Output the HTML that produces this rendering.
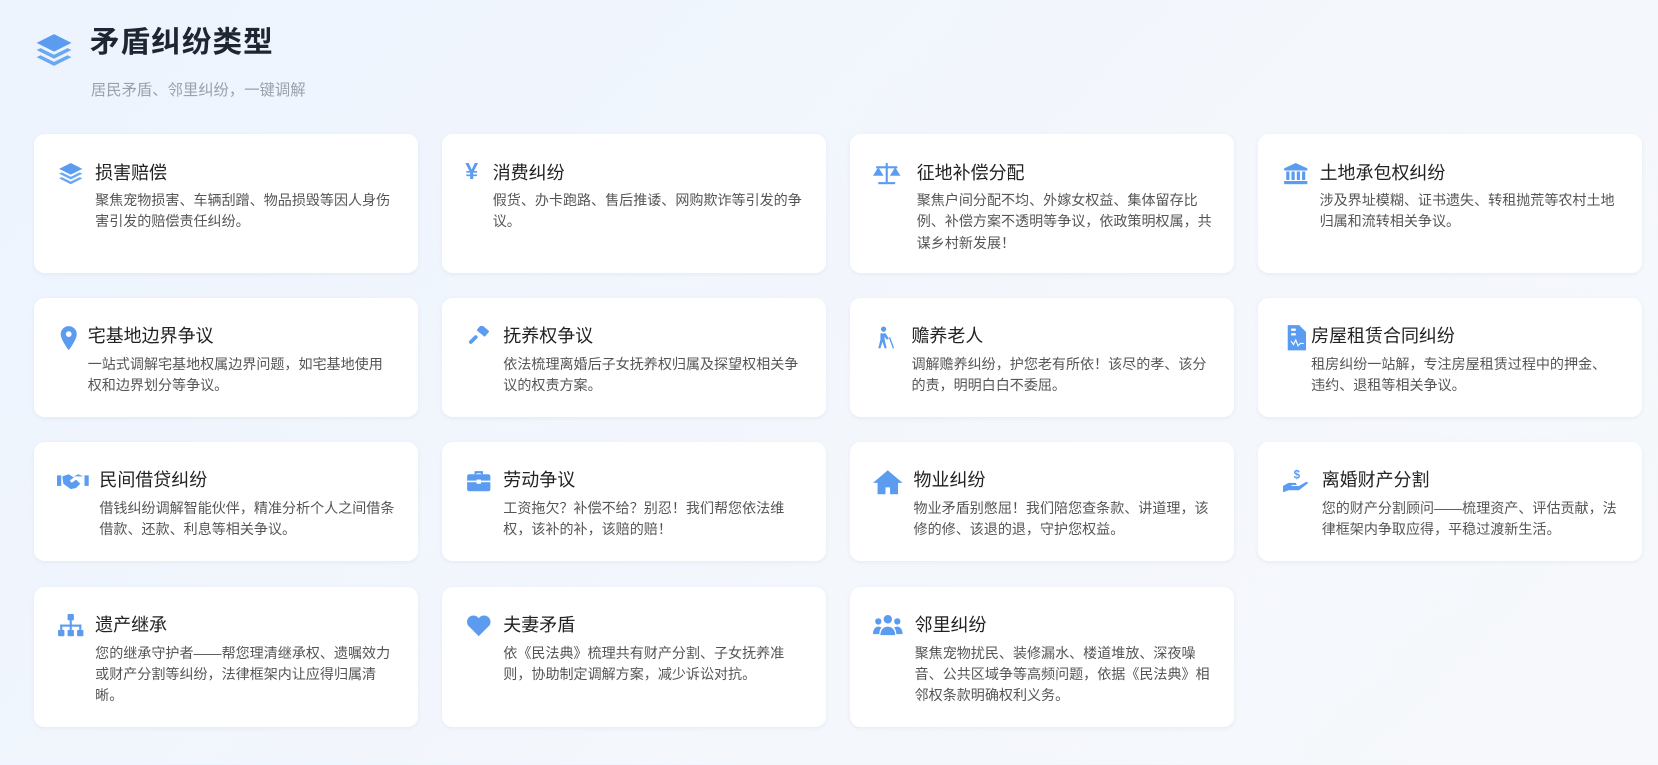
<!DOCTYPE html>
<html><head><meta charset="utf-8"><style>
*{margin:0;padding:0;box-sizing:border-box}
body{width:1658px;height:764px;overflow:hidden;background:linear-gradient(135deg,#edf4fe 0%,#f4f7fc 60%,#f6f8fb 100%);font-family:"Liberation Sans","Noto Sans CJK SC",sans-serif;}
.wrap{position:relative;width:1568px;height:723px;zoom:1.0574}
.hicon{position:absolute;left:33px;top:29px}
h1{position:absolute;left:85px;top:17px;font-size:28px;font-weight:700;color:#1f2633;letter-spacing:1px}
.sub{position:absolute;left:86px;top:74px;font-size:14.5px;color:#9aa1ab}
.grid{position:absolute;left:32px;top:127px;display:grid;grid-template-columns:363px 363px 363px 363px;column-gap:23px;row-gap:24px;grid-template-rows:131px 112px 113px 133px}
.card{background:#fff;border-radius:10px;box-shadow:0 1px 4px rgba(120,140,180,.10);position:relative}
.ic{position:absolute;left:22px;top:26px;width:26px;height:22px}
.t{position:absolute;left:58px;top:23px;font-size:17px;color:#222;}
.d{position:absolute;left:58px;top:53px;right:20px;font-size:13.3px;line-height:20px;color:#555}
svg{display:block}
</style></head><body><div class="wrap">
<svg class="hicon" width="36" height="36" viewBox="0 0 24 24"><path fill="#5b9cf0" d="M12 2 1 7.5 12 13l11-5.5z"/><path fill="#6aa8f4" d="M3.5 10.8 1 12l11 5.5L23 12l-2.5-1.2L12 15z"/><path fill="#6aa8f4" d="M3.5 15.3 1 16.5 12 22l11-5.5-2.5-1.2L12 19.5z"/></svg>
<h1>矛盾纠纷类型</h1>
<div class="sub">居民矛盾、邻里纠纷，一键调解</div>
<div class="grid">
<div class="card"><svg class="ic" viewBox="0 0 24 22"><path fill="#5b9cf0" d="M12 1 1 6.5 12 12l11-5.5z"/><path fill="#6aa8f4" d="M3.5 9.8 1 11l11 5.5L23 11l-2.5-1.2L12 14z"/><path fill="#6aa8f4" d="M3.5 14.3 1 15.5 12 21l11-5.5-2.5-1.2L12 18.5z"/></svg><div class="t">损害赔偿</div><div class="d">聚焦宠物损害、车辆刮蹭、物品损毁等因人身伤害引发的赔偿责任纠纷。</div></div>
<div class="card"><div class="ic" style="color:#5b9cf0;font-size:22px;font-weight:700;top:22px">¥</div><div class="t" style="left:48px">消费纠纷</div><div class="d" style="left:48px;right:18px">假货、办卡跑路、售后推诿、网购欺诈等引发的争议。</div></div>
<div class="card"><svg class="ic" viewBox="0 0 26 22"><g fill="#5b9cf0"><rect x="12" y="1" width="2" height="18"/><rect x="5" y="19" width="16" height="2"/><rect x="3" y="4" width="20" height="2"/><path d="M0 13h10l-5-8zM16 13h10l-5-8z"/></g></svg><div class="t" style="left:63px">征地补偿分配</div><div class="d" style="left:63px;right:10px">聚焦户间分配不均、外嫁女权益、集体留存比例、补偿方案不透明等争议，依政策明权属，共谋乡村新发展！</div></div>
<div class="card"><svg class="ic" viewBox="0 0 24 22"><g fill="#5b9cf0"><path d="M12 1 1 6v2h22V6z"/><rect x="3" y="9" width="3" height="8"/><rect x="8" y="9" width="3" height="8"/><rect x="13" y="9" width="3" height="8"/><rect x="18" y="9" width="3" height="8"/><rect x="1" y="18" width="22" height="3"/></g></svg><div class="t">土地承包权纠纷</div><div class="d">涉及界址模糊、证书遗失、转租抛荒等农村土地归属和流转相关争议。</div></div>

<div class="card"><svg class="ic" viewBox="0 0 24 22" style="left:20px;height:24px"><path fill="#5b9cf0" d="M12 0a7 7 0 0 0-7 7c0 5 7 14 7 14s7-9 7-14a7 7 0 0 0-7-7zm0 9.5a2.5 2.5 0 1 1 0-5 2.5 2.5 0 0 1 0 5z"/></svg><div class="t" style="left:51px">宅基地边界争议</div><div class="d" style="left:51px;right:22px">一站式调解宅基地权属边界问题，如宅基地使用权和边界划分等争议。</div></div>
<div class="card"><svg class="ic" viewBox="0 0 24 22"><g fill="#5b9cf0"><rect x="11" y="1" width="10" height="7" rx="1" transform="rotate(40 16 4.5)"/><rect x="2" y="11" width="10" height="3.5" rx="1.5" transform="rotate(-45 7 13)"/></g></svg><div class="t" style="left:58px">抚养权争议</div><div class="d" style="left:58px">依法梳理离婚后子女抚养权归属及探望权相关争议的权责方案。</div></div>
<div class="card"><svg class="ic" viewBox="0 0 24 22"><g fill="#5b9cf0"><circle cx="9" cy="3" r="2.5"/><path d="M6 7h5l3 5-2 1-2-3v3l2 8h-2l-2-6-2 6H4l2-8z"/><rect x="14" y="11" width="1.3" height="11" transform="rotate(-20 14 11)"/></g></svg><div class="t">赡养老人</div><div class="d">调解赡养纠纷，护您老有所依！该尽的孝、该分的责，明明白白不委屈。</div></div>
<div class="card"><svg class="ic" viewBox="0 0 24 22" style="height:26px;top:24px"><path fill="#5b9cf0" d="M5 0h10l6 6v16H5z"/><path d="M8 14l2 3 2-4 2 5 2-2h3" stroke="#fff" stroke-width="1" fill="none"/><rect x="8" y="3" width="4" height="2" fill="#fff"/><rect x="8" y="7" width="4" height="2" fill="#fff"/></svg><div class="t" style="left:50px">房屋租赁合同纠纷</div><div class="d" style="left:50px;right:24px">租房纠纷一站解，专注房屋租赁过程中的押金、违约、退租等相关争议。</div></div>

<div class="card"><svg class="ic" viewBox="0 0 30 22" style="width:30px;left:22px"><g fill="#5b9cf0"><rect x="0" y="6" width="4" height="10"/><rect x="26" y="6" width="4" height="10"/><path d="M5 7l6-2 5 3-4 3 2 2 4-3 4 4-4 4-5 1-7-5z"/><path d="M25 7l-5-2-4 2 2 0z"/></g></svg><div class="t" style="left:62px">民间借贷纠纷</div><div class="d" style="left:62px">借钱纠纷调解智能伙伴，精准分析个人之间借条借款、还款、利息等相关争议。</div></div>
<div class="card"><svg class="ic" viewBox="0 0 24 22"><g fill="#5b9cf0"><path d="M8 2h8v3h-2V4h-4v1H8z"/><rect x="1" y="5" width="22" height="16" rx="2"/></g><rect x="1" y="11" width="22" height="1.5" fill="#fff"/><rect x="10" y="10" width="4" height="4" fill="#fff"/></svg><div class="t">劳动争议</div><div class="d">工资拖欠？补偿不给？别忍！我们帮您依法维权，该补的补，该赔的赔！</div></div>
<div class="card"><svg class="ic" viewBox="0 0 26 22" style="width:28px;height:24px"><path fill="#5b9cf0" d="M13 1 0 12h4v10h7v-6h4v6h7V12h4z"/></svg><div class="t" style="left:60px">物业纠纷</div><div class="d" style="left:60px">物业矛盾别憋屈！我们陪您查条款、讲道理，该修的修、该退的退，守护您权益。</div></div>
<div class="card"><svg class="ic" viewBox="0 0 26 24" style="height:26px;top:24px"><text x="11" y="10" fill="#5b9cf0" font-size="11" font-weight="700" font-family="Liberation Sans">$</text><path fill="#5b9cf0" d="M1 17l5-3h7l1 2H9v1h7l7-4 2 1-9 7H6l-5 2z"/></svg><div class="t" style="left:60px">离婚财产分割</div><div class="d" style="left:60px">您的财产分割顾问——梳理资产、评估贡献，法律框架内争取应得，平稳过渡新生活。</div></div>

<div class="card"><svg class="ic" viewBox="0 0 26 22"><g fill="#5b9cf0"><rect x="10" y="0" width="6" height="6" rx="1"/><rect x="12" y="6" width="2" height="5"/><rect x="3" y="10" width="20" height="2"/><rect x="3" y="10" width="2" height="5"/><rect x="21" y="10" width="2" height="5"/><rect x="12" y="10" width="2" height="5"/><rect x="1" y="15" width="6" height="6" rx="1"/><rect x="10" y="15" width="6" height="6" rx="1"/><rect x="19" y="15" width="6" height="6" rx="1"/></g></svg><div class="t">遗产继承</div><div class="d">您的继承守护者——帮您理清继承权、遗嘱效力或财产分割等纠纷，法律框架内让应得归属清晰。</div></div>
<div class="card"><svg class="ic" viewBox="0 0 24 22"><path fill="#5b9cf0" d="M12 21 2 11A5.5 5.5 0 0 1 12 4a5.5 5.5 0 0 1 10 7z"/></svg><div class="t">夫妻矛盾</div><div class="d">依《民法典》梳理共有财产分割、子女抚养准则，协助制定调解方案，减少诉讼对抗。</div></div>
<div class="card"><svg class="ic" viewBox="0 0 28 22" style="width:28px"><g fill="#5b9cf0"><circle cx="14" cy="5" r="4"/><circle cx="5" cy="7" r="3"/><circle cx="23" cy="7" r="3"/><path d="M7 20c0-5 3-8 7-8s7 3 7 8z"/><path d="M0 19c0-4 2-7 5-7 1.5 0 2.5.5 3 1-1.5 1.5-2 3.5-2 6z"/><path d="M28 19c0-4-2-7-5-7-1.5 0-2.5.5-3 1 1.5 1.5 2 3.5 2 6z"/></g></svg><div class="t" style="left:61px">邻里纠纷</div><div class="d" style="left:61px">聚焦宠物扰民、装修漏水、楼道堆放、深夜噪音、公共区域争等高频问题，依据《民法典》相邻权条款明确权利义务。</div></div>
</div>
</div></body></html>
